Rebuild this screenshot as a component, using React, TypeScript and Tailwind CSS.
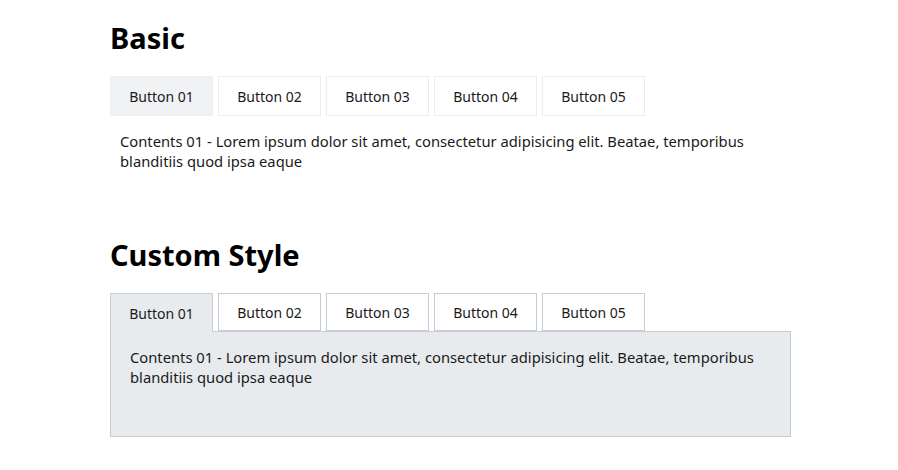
import { useState } from 'react';

const tabs = ['Button 01', 'Button 02', 'Button 03', 'Button 04', 'Button 05'];
const body =
  'Lorem ipsum dolor sit amet, consectetur adipisicing elit. Beatae, temporibus blanditiis quod ipsa eaque';

const font = { fontFamily: '"Noto Sans", "Noto Sans CJK KR", sans-serif' };

const label = (i: number) => `Contents ${String(i + 1).padStart(2, '0')} - ${body}`;

function BasicTabs() {
  const [active, setActive] = useState(0);
  return (
    <section className="w-[681px]">
      <h1 className="text-[29px] font-bold leading-9 text-black">Basic</h1>
      <div className="mt-5 flex gap-[5px]">
        {tabs.map((t, i) => (
          <button
            key={t}
            onClick={() => setActive(i)}
            className={
              'h-10 w-[103px] border text-[14px] text-[#1a1a1a] ' +
              (i === active ? 'border-[#eceef0] bg-[#f1f2f4]' : 'border-[#ececec] bg-white')
            }
          >
            {t}
          </button>
        ))}
      </div>
      <p className="px-[10px] pt-[15px] text-[14.75px] leading-5 text-[#1a1a1a]">{label(active)}</p>
    </section>
  );
}

function CustomTabs() {
  const [active, setActive] = useState(0);
  return (
    <section className="mt-[66px] w-[681px]">
      <h1 className="text-[29px] font-bold leading-9 text-black">Custom Style</h1>
      <div className="mt-5 flex gap-[5px]">
        {tabs.map((t, i) => (
          <button
            key={t}
            onClick={() => setActive(i)}
            className={
              'relative w-[103px] border border-[#c9cdd2] text-[14px] text-[#1a1a1a] ' +
              (i === active
                ? 'z-10 -mb-px h-[39px] border-b-0 bg-[#e8ebee]'
                : 'h-[38px] bg-white')
            }
          >
            {t}
          </button>
        ))}
      </div>
      <div className="h-[106px] border border-[#c9cdd2] bg-[#e8ebee] pl-[19px] pr-5 pt-[15px] text-[14.75px] leading-5 text-[#1a1a1a]">
        {label(active)}
      </div>
    </section>
  );
}

export default function App() {
  return (
    <div className="min-h-[470px] bg-white pl-[110px] pt-5" style={font}>
      <BasicTabs />
      <CustomTabs />
    </div>
  );
}
